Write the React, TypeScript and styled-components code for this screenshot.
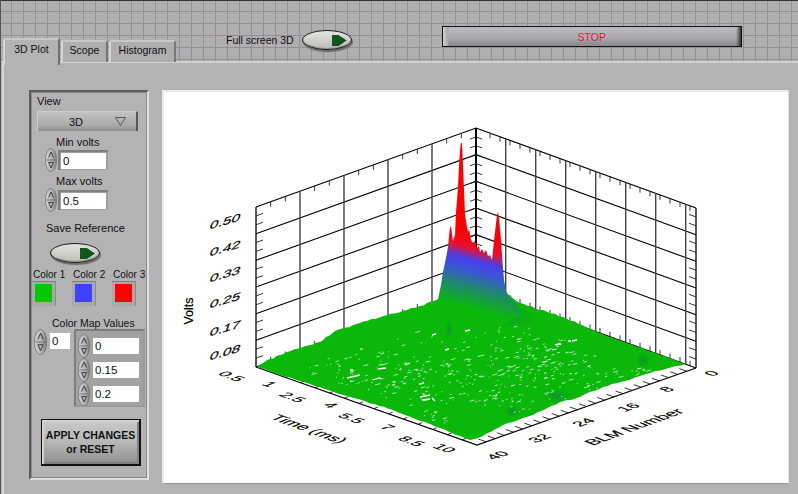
import React from "react";
import styled, { createGlobalStyle } from "styled-components";

const Global = createGlobalStyle`
  html, body { margin: 0; padding: 0; background: #b3b3b3; overflow: hidden; }
  * { box-sizing: border-box; }
`;

const Page = styled.div`
  width: 798px; height: 494px; display: flex; flex-direction: column;
  font: 11px "Liberation Sans", Arial, sans-serif; color: #111; background: #b3b3b3;
  border-left: 1px solid #555;
`;
const TopBar = styled.div`
  height: 61px; flex: none; display: flex; align-items: flex-start; padding: 0 0 0 2px;
  border-top: 1px solid #333;
  background-color: #b1aeb2;
  background-image:
    linear-gradient(to right, #939094 1px, transparent 1px),
    linear-gradient(to bottom, #939094 1px, transparent 1px);
  background-size: 12px 12px;
  background-position: 10px 10px;
`;
const Tabs = styled.div`display: flex; align-items: flex-end; height: 62px; gap: 1px;`;
const Tab = styled.div<{ $active?: boolean; $wide?: boolean }>`
  position: relative; z-index: ${p => (p.$active ? 2 : 1)};
  display: flex; justify-content: center; font-size: 10.5px;
  width: ${p => (p.$active ? 57 : p.$wide ? 67 : 47)}px;
  height: ${p => (p.$active ? 27 : 22)}px;
  margin-bottom: ${p => (p.$active ? -2 : 1)}px;
  padding-top: ${p => (p.$active ? 3 : 2)}px;
  background: ${p => (p.$active ? "#b3b3b3" : "#aeaeae")};
  border-top: 2px solid #c9c9c9; border-left: 2px solid #d6d6d6;
  border-right: 2px solid ${p => (p.$active ? "#6f6f6f" : "#777")};
  border-radius: 3px 3px 0 0;
`;
const FullScreen = styled.div`
  display: flex; align-items: center; gap: 8px; margin: 29px 0 0 50px; height: 20px; font-size: 10.5px;
`;
const Toggle = styled.div`
  position: relative; width: 50px; height: 20px; border-radius: 50%;
  border: 1.5px solid #222;
  background: linear-gradient(to bottom, #e2e2df, #bdbdb9);
  box-shadow: 1px 2px 1px #6c6c6c, inset 0 -1px 1px #8a8a8a;
`;
const ToggleArrow = styled.span`
  position: absolute; left: 29px; top: 4px; width: 15px; height: 11px;
  background: #14531a;
  clip-path: polygon(0 0, 45% 0, 100% 50%, 45% 100%, 0 100%);
`;
const StopButton = styled.div`
  width: 300px; height: 21px; margin: 25px 0 0 90px; display: flex; align-items: center; justify-content: center;
  border: 1px solid #111; color: #e3173a; font-size: 10.5px;
  background:
    linear-gradient(to right, #d0d0d0 0, #a8a6ab 5px, transparent 6px, transparent calc(100% - 5px), #333 100%),
    linear-gradient(to bottom, #bdbbc0, #aaa8ad 60%, #8f8d92 90%);
`;
const Body = styled.div`
  flex: 1; display: flex; gap: 13px; padding: 27px 8px 10px 25px; border-top: 2px solid #d2d2d2; margin-left: 1px;
  border-left: 2px solid #d6d6d6;
  min-height: 0;
`;
const SidePanel = styled.div`
  width: 120px; height: 390px; flex: none; display: flex; flex-direction: column; align-items: flex-start;
  border: 2px solid; border-color: #5c5c5c #e0e0e0 #e0e0e0 #5c5c5c;
  outline: 1px solid #8a8a8a; outline-offset: -3px;
  padding-top: 3px;
`;
const Caption = styled.div<{ $ml: number; $mt?: number; $mb?: number; $fs?: number }>`
  height: 13px; line-height: 13px; white-space: nowrap; font-size: ${p => p.$fs ?? 11}px;
  margin-left: ${p => p.$ml}px; margin-top: ${p => p.$mt ?? 0}px; margin-bottom: ${p => p.$mb ?? 0}px;
`;
const SelectBox = styled.div`
  width: 101px; height: 20px; margin: 3px 0 0 6px; display: flex; align-items: center; padding: 0 10px 0 31px; justify-content: space-between;
  background: linear-gradient(to bottom, #c2c2c2, #aaa 70%, #8d8d8d);
  border-right: 2px solid #555; border-top: 1px solid #ccc; border-left: 1px solid #ccc;
`;
const SpinField = styled.div`
  display: flex; align-items: center; height: 24px; margin-left: 14px;
`;
const SpinIcon = styled.svg`flex: none; display: block;`;
const FieldFrame = styled.div<{ $w: number }>`
  width: ${p => p.$w}px; height: 20px; margin-left: 1px; padding: 1px 2px 2px 1px;
  background: #a0a0a0; border-top: 2px solid #7f7f7f; border-left: 2px solid #7f7f7f;
`;
const FieldValue = styled.div`
  height: 16px; width: 100%; background: #fff; line-height: 16px; padding-left: 2px; font-size: 11.5px;
`;
const ToggleSlot = styled.div`margin: 8px 0 0 19px;`;
const ColorGrid = styled.div<{ $ml: number; $mt?: number }>`
  display: grid; grid-template-columns: repeat(3, 40px); margin-left: ${p => p.$ml}px; margin-top: ${p => p.$mt ?? 0}px;
`;
const SwatchLabel = styled.div`height: 13px; line-height: 13px; white-space: nowrap; font-size: 10px;`;
const Swatch = styled.div<{ $c: string }>`
  width: 24px; height: 25px; padding: 2px 3px 4px 3px; background: #a9a9a9;
  border-top: 1px solid #7d7d7d; border-right: 1px solid #8a8a8a;
  &::after { content: ""; display: block; width: 100%; height: 100%; background: ${p => p.$c}; }
`;
const MapRow = styled.div`display: flex; margin: -1px 0 0 3px; height: 79px;`;
const MapLeft = styled.div`display: flex; align-items: flex-start; width: 40px; gap: 3px;`;
const MapSingle = styled.div`
  width: 20px; height: 16px; margin-top: 4px; background: #fff; padding-left: 2px; line-height: 16px; font-size: 11.5px;
`;
const MapCluster = styled.div`
  width: 71px; height: 78px; padding: 5px 0 0 4px; display: flex; flex-direction: column;
  background: #a2a2a2; border: 2px solid; border-color: #7e7e7e #9a9a9a #9a9a9a #7e7e7e;
`;
const MapItem = styled.div`display: flex; align-items: center; gap: 3px; height: 24px; margin-left: -2px; margin-top: -2px; &+&{margin-top:0;}`;
const MapValue = styled.div`
  width: 46px; height: 16px; background: #fff; padding-left: 2px; line-height: 16px; font-size: 11.5px;
`;
const ApplyButton = styled.div`
  width: 100px; height: 47px; margin: 11px 0 0 10px; display: flex; align-items: center; justify-content: center; text-align: center;
  font-weight: bold; font-size: 10.5px; line-height: 14px; color: #111;
  border: 1px solid #111; border-right: 2px solid #111; border-bottom: 2px solid #111;
  background: linear-gradient(to bottom, #c9c9c9 0, #b7b7b7 50%, #8f8f8f 100%);
  box-shadow: inset 2px 2px 0 #d3d3d3, inset -2px -2px 0 #7f7f7f;
`;
const ChartFrame = styled.div`
  width: 627px; height: 394px; flex: none; background: #fff;
  border-top: 2px solid #eaeaea; border-left: 2px solid #eaeaea; border-bottom: 1px solid #969696; border-right: 1px solid #e0e0e0;
  overflow: hidden;
`;
const ChartSvg = styled.svg`display: block; width: 100%; height: 100%;`;

const Spinner = ({ w = 12, h = 24 }: { w?: number; h?: number }) => (
  <SpinIcon width={w} height={h} viewBox="0 0 12 24" preserveAspectRatio="none">
    <defs>
      <linearGradient id="spg" x1="0" x2="1" y1="0" y2="0">
        <stop offset="0" stopColor="#d2d2d2" />
        <stop offset="0.55" stopColor="#b5b5b5" />
        <stop offset="1" stopColor="#7c7c7c" />
      </linearGradient>
    </defs>
    <ellipse cx="6" cy="12" rx="5.7" ry="11.6" fill="url(#spg)" stroke="#777" strokeWidth="0.8" />
    <path d="M1 12H11" stroke="#666" strokeWidth="0.8" />
    <path d="M3.6 9.5 L6.2 4 L8.4 9.5" fill="none" stroke="#333" strokeWidth="0.9" />
    <path d="M3.6 14.5 H8.4 L6 20Z" fill="none" stroke="#333" strokeWidth="0.9" />
  </SpinIcon>
);

/* ---- plot drawing ---- */
const lerp = (a: number, b: number, t: number) => a + (b - a) * t;
const back = [476, 288], leftC = [256, 367], rightC = [696, 368];
const floorPt = (u: number, v: number) => [
  back[0] + u * (leftC[0] - back[0]) + v * (rightC[0] - back[0]),
  back[1] + u * (leftC[1] - back[1]) + v * (rightC[1] - back[1]),
];

let seed = 12345;
const rnd = () => { seed = (seed * 1103515 + 12345) % 2147483648; return seed / 2147483648; };

function jag(points: number[][], amp: number, step: number) {
  const out: number[][] = [];
  for (let i = 0; i < points.length - 1; i++) {
    const [x0, y0] = points[i], [x1, y1] = points[i + 1];
    const n = Math.max(1, Math.round(Math.hypot(x1 - x0, y1 - y0) / step));
    for (let k = 0; k < n; k++) {
      const t = k / n;
      out.push([lerp(x0, x1, t), lerp(y0, y1, t) + (k ? (rnd() - 0.5) * amp : 0)]);
    }
  }
  out.push(points[points.length - 1]);
  return out;
}
const toPts = (p: number[][]) => p.map(([x, y]) => `${x.toFixed(1)},${y.toFixed(1)}`).join(" ");

const floorTop = jag([[257, 367], [270, 359], [287, 352], [320, 342], [335, 331], [360, 323], [387, 315], [407, 310], [420, 306], [437, 300], [500, 295], [507, 294], [520, 303], [563, 317], [593, 330], [623, 342], [653, 352], [683, 363], [686, 364]], 1.6, 4);
const floorBottom = jag([[686, 364], [650, 373], [625, 381], [603, 387], [577, 398], [560, 402], [533, 415], [503, 425], [478, 438], [470, 440], [440, 428], [393, 410], [347, 396], [300, 381], [257, 367]], 1.2, 5);
const floorPoly = toPts([...floorTop, ...floorBottom]);

const peakPts = [
  [430, 304], [438, 299], [441, 285], [443, 272], [446, 258], [448, 247], [449, 236], [450, 228], [451, 226], [452, 234], [453, 241], [455, 235], [456, 212], [458, 187], [459, 165], [460, 150], [461, 143], [462, 143], [463, 165], [464, 190], [465, 215], [467, 227], [468, 232], [469, 229], [471, 240], [473, 243], [475, 241], [477, 248], [479, 246], [480, 252], [482, 249], [484, 253], [486, 250], [488, 256], [490, 255], [492, 260], [493, 250], [495, 232], [497, 215], [498, 212], [499, 218], [501, 240], [502, 255], [503, 268], [504, 280], [506, 291], [510, 298], [516, 303], [524, 314], [500, 325], [450, 322],
];

const specks: string[] = [];
const clusters = [
  [0.72, 0.32, 0.2, 46], [0.62, 0.52, 0.2, 40], [0.52, 0.62, 0.2, 40], [0.42, 0.72, 0.2, 44], [0.38, 0.5, 0.2, 34],
  [0.28, 0.72, 0.18, 40], [0.82, 0.52, 0.14, 30], [0.52, 0.32, 0.18, 24], [0.85, 0.22, 0.12, 22], [0.25, 0.55, 0.16, 30],
  [0.2, 0.42, 0.12, 20], [0.65, 0.78, 0.12, 24], [0.9, 0.72, 0.06, 14], [0.15, 0.9, 0.06, 12],
];
clusters.forEach(([u, v, r, n]) => {
  for (let i = 0; i < n; i++) {
    const p = floorPt(u + (rnd() - 0.5) * r * 1.2, v + (rnd() - 0.5) * r * 2);
    const l = 1 + rnd() * rnd() * 5;
    specks.push(`M${p[0].toFixed(1)} ${p[1].toFixed(1)}l${l.toFixed(1)} ${(-l * 0.25).toFixed(1)}`);
  }
});
const specksD = specks.join("");
const bigSpecks = "M347 378l13-3M378 369l8-1M373 380l6-2 3 1M420 397l10-2M422 400l8-1M432 398l3 3M419 384l5-1M405 365l5-2M350 370l3 0M432 335l4-1M465 331l5-1M445 350l4-1M555 345l6-1M572 341l5-1M568 341l3 0";

const wallY = [0, 1, 2, 3, 4, 5, 6];
const leftX = [300, 344, 388, 432];
const rightX = [505.7, 535.7, 565.7, 595.7, 625.7, 655.7, 685.7];

const minorTicks: string[] = [];
for (let i = 0; i < 15; i++) {
  if (i % 3 === 0) continue;
  const x = 256 + (i * 220) / 15;
  const yt = 207 - ((x - 256) / 220) * 79;
  const yb = 367 - ((x - 256) / 220) * 79;
  minorTicks.push(`M${x} ${yt}v5M${x} ${yb}v-5`);
}
for (let i = 0; i < 22; i++) {
  const x = 476 + i * 10 + 14;
  if (x > 692) break;
  const yt = 128 + ((x - 476) / 220) * 80;
  const yb = 288 + ((x - 476) / 220) * 80;
  minorTicks.push(`M${x} ${yt}v5M${x} ${yb}v-5`);
}
for (let k = 0; k < 18; k++) {
  if (k % 3 === 0) continue;
  const dy = (k * 160) / 18;
  minorTicks.push(`M256 ${207 + dy}l7-2.5`);
  minorTicks.push(`M696 ${208 + dy}l-7-2.5`);
}
for (let k = 1; k < 18; k++) {
  const dy = (k * 160) / 18;
  minorTicks.push(`M476 ${128 + dy}l-6 2.2M476 ${128 + dy}l6 2.2`);
}
for (let i = 1; i < 15; i++) {
  const t = i / 15;
  minorTicks.push(`M${lerp(256, 477, t)} ${lerp(367, 445, t)}l4-1.6`);
}
for (let i = 1; i < 24; i++) {
  const t = i / 24;
  minorTicks.push(`M${lerp(477, 696, t)} ${lerp(445, 368, t)}l-7.5-2.6`);
}
const ticksD = minorTicks.join("");

const yLabels: [string, number][] = [["0.50", 225], ["0.42", 252], ["0.33", 278], ["0.25", 304], ["0.17", 332], ["0.08", 356]];
const leftFloor: [string, number, number][] = [["0.5", 227, 375], ["1", 265, 383], ["2.5", 288, 396], ["4", 326, 404], ["5.5", 347, 417], ["7", 383, 426], ["8.5", 407, 440], ["10", 440, 447]];
const rightFloor: [string, number, number][] = [["0", 716, 372], ["8", 671, 388], ["16", 633, 406], ["24", 588, 421], ["32", 544, 437], ["40", 502, 454]];

const Plot = () => (
  <ChartSvg viewBox="164 92 624 391" preserveAspectRatio="none">
    <defs>
      <linearGradient id="peak" gradientUnits="userSpaceOnUse" x1="484" y1="236" x2="462" y2="320">
        <stop offset="0" stopColor="#ff0000" />
        <stop offset="0.17" stopColor="#e8102a" />
        <stop offset="0.3" stopColor="#4a3fe8" />
        <stop offset="0.42" stopColor="#3a55d8" />
        <stop offset="0.62" stopColor="#1f8a6a" />
        <stop offset="0.85" stopColor="#0ab80a" />
      </linearGradient>
      <radialGradient id="bump">
        <stop offset="0" stopColor="#0b8a30" stopOpacity="0.7" />
        <stop offset="1" stopColor="#0b8a30" stopOpacity="0" />
      </radialGradient>
    </defs>
    <g stroke="#000" strokeWidth="1.1" fill="none">
      {wallY.map(k => (
        <path key={k} d={`M256 ${207 + k * 26.67}L476 ${128 + k * 26.67}L696 ${208 + k * 26.67}`} />
      ))}
      <g stroke="#444" strokeWidth="1.4">
        {leftX.map(x => <path key={x} d={`M${x} ${207 - ((x - 256) / 220) * 79}V${367 - ((x - 256) / 220) * 79}`} />)}
        {rightX.map(x => <path key={x} d={`M${x} ${128 + ((x - 476) / 220) * 80}V${288 + ((x - 476) / 220) * 80}`} />)}
      </g>
      <path d="M256 207V367M696 208V368" strokeWidth="1.3" />
      <path d="M476 128V290" strokeWidth="2" />
      <path d={ticksD} strokeWidth="0.9" stroke="#222" />
      <path d="M256 367L477 445L696 368" strokeWidth="1.2" />
    </g>
    <polygon points={floorPoly} fill="#0ab80a" />
    <ellipse cx="643" cy="360" rx="7" ry="9" fill="url(#bump)" />
    <ellipse cx="557" cy="396" rx="14" ry="8" fill="url(#bump)" />
    <ellipse cx="512" cy="411" rx="8" ry="6" fill="url(#bump)" />
    <ellipse cx="449" cy="330" rx="4" ry="10" fill="url(#bump)" />
    <ellipse cx="514" cy="318" rx="22" ry="12" fill="url(#bump)" opacity="0.6" />
    <polygon points={toPts(peakPts)} fill="url(#peak)" />
    <path d={specksD} stroke="#fff" strokeWidth="0.8" fill="none" opacity="0.8" />
    <path d={bigSpecks} stroke="#fff" strokeWidth="1.3" fill="none" />
    <g fontFamily="'Liberation Sans', Arial, sans-serif" fill="#000" stroke="#000" strokeWidth="0.2">
      {yLabels.map(([t, y]) => (
        <text key={t} fontSize="12.5" textAnchor="middle" transform={`matrix(1.25,-0.36,-0.3,0.9,224,${y})`}>{t}</text>
      ))}
      <text fontSize="12.5" textAnchor="middle" transform="translate(193,311) rotate(-90)">Volts</text>
      {leftFloor.map(([t, x, y]) => (
        <text key={t} fontSize="14" textAnchor="middle" transform={`matrix(1.05,0.38,-0.95,0.36,${x},${y + 3})`}>{t}</text>
      ))}
      {rightFloor.map(([t, x, y]) => (
        <text key={t} fontSize="14" textAnchor="middle" transform={`matrix(1.05,-0.38,0.95,0.36,${x},${y + 3})`}>{t}</text>
      ))}
      <text fontSize="15" textAnchor="middle" transform="matrix(1.05,0.38,-0.95,0.4,304,431)">Time (ms)</text>
      <text fontSize="15" textAnchor="middle" transform="matrix(1.05,-0.38,0.95,0.4,639,429)">BLM Number</text>
    </g>
  </ChartSvg>
);

export default function App() {
  return (
    <Page>
      <Global />
      <TopBar>
        <Tabs>
          <Tab $active>3D Plot</Tab>
          <Tab>Scope</Tab>
          <Tab $wide>Histogram</Tab>
        </Tabs>
        <FullScreen>
          <span>Full screen 3D</span>
          <Toggle><ToggleArrow /></Toggle>
        </FullScreen>
        <StopButton>STOP</StopButton>
      </TopBar>
      <Body>
        <SidePanel>
          <Caption $ml={6}>View</Caption>
          <SelectBox>
            <span>3D</span>
            <svg width="11" height="9" viewBox="0 0 11 9"><path d="M0.5 0.5H10.5L5.5 8.5Z" fill="none" stroke="#444" strokeWidth="0.8" /></svg>
          </SelectBox>
          <Caption $ml={25} $mt={5} $mb={-1}>Min volts</Caption>
          <SpinField>
            <Spinner />
            <FieldFrame $w={50}><FieldValue>0</FieldValue></FieldFrame>
          </SpinField>
          <Caption $ml={25} $mt={3}>Max volts</Caption>
          <SpinField>
            <Spinner />
            <FieldFrame $w={50}><FieldValue>0.5</FieldValue></FieldFrame>
          </SpinField>
          <Caption $ml={15} $mt={10}>Save Reference</Caption>
          <ToggleSlot><Toggle><ToggleArrow /></Toggle></ToggleSlot>
          <ColorGrid $ml={2} $mt={5}>
            <SwatchLabel>Color 1</SwatchLabel>
            <SwatchLabel>Color 2</SwatchLabel>
            <SwatchLabel>Color 3</SwatchLabel>
          </ColorGrid>
          <ColorGrid $ml={1}>
            <Swatch $c="#05c805" />
            <Swatch $c="#4040ff" />
            <Swatch $c="#ff0000" />
          </ColorGrid>
          <Caption $ml={21} $mt={11} $fs={10.5}>Color Map Values</Caption>
          <MapRow>
            <MapLeft>
              <Spinner h={26} w={13} />
              <MapSingle>0</MapSingle>
            </MapLeft>
            <MapCluster>
              <MapItem><Spinner /><MapValue>0</MapValue></MapItem>
              <MapItem><Spinner /><MapValue>0.15</MapValue></MapItem>
              <MapItem><Spinner /><MapValue>0.2</MapValue></MapItem>
            </MapCluster>
          </MapRow>
          <ApplyButton>APPLY CHANGES<br />or RESET</ApplyButton>
        </SidePanel>
        <ChartFrame><Plot /></ChartFrame>
      </Body>
    </Page>
  );
}
